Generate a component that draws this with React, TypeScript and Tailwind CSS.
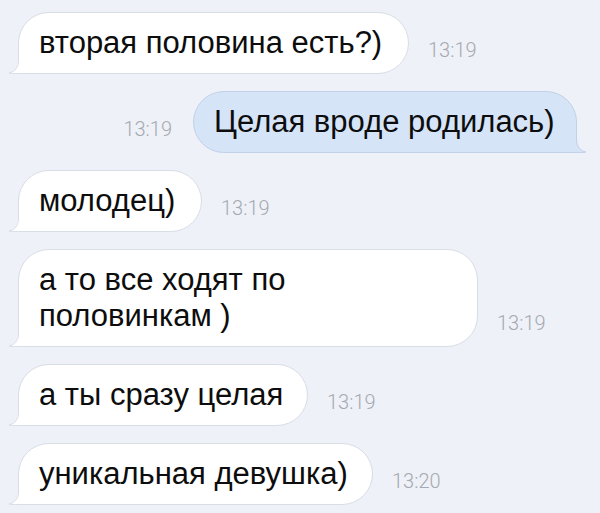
import React from 'react';

type Msg = {
    text: React.ReactNode;
    time: string;
    out?: boolean;
    width: string;
};

const messages: Msg[] = [
    { text: 'вторая половина есть?)', time: '13:19', width: 'w-[391px]' },
    { text: 'Целая вроде родилась)', time: '13:19', out: true, width: 'w-[384px]' },
    { text: 'молодец)', time: '13:19', width: 'w-[184px]' },
    {
        text: (
            <>
                а то все ходят по
                <br />
                половинкам )
            </>
        ),
        time: '13:19',
        width: 'w-[460px]',
    },
    { text: 'а ты сразу целая', time: '13:19', width: 'w-[290px]' },
    { text: 'уникальная девушка)', time: '13:20', width: 'w-[355px]' },
];

// iOS style tail, drawn for the bottom-left corner; mirrored for outgoing bubbles
const Tail = ({ fill, stroke, out }: { fill: string; stroke: string; out?: boolean }) => (
    <svg
        width="44"
        height="34"
        viewBox="0 0 44 34"
        className={`absolute bottom-[-1px] ${out ? 'right-[-11px] -scale-x-100' : 'left-[-11px]'}`}
    >
        <path d="M10 1 L10 21 C10 28 6 32 1 33 C5 34 9 34 14 34 L44 34 L44 1 Z" fill={fill} />
        <path
            d="M10.5 1 L10.5 21 C10.5 28 6 32 1 33 C5 33.8 9 33.5 14 33.5 L44 33.5"
            fill="none"
            stroke={stroke}
            strokeWidth="1"
        />
    </svg>
);

const Bubble = ({ msg }: { msg: Msg }) => {
    const fill = msg.out ? '#d6e4f8' : '#ffffff';
    const stroke = msg.out ? '#c2d1e7' : '#d8dde6';
    return (
        <div
            className={`relative ${msg.width} rounded-[31px] border pl-[20px] py-[12px] text-[31px] leading-[36px] text-[#0d0d0d] whitespace-nowrap ${
                msg.out ? 'bg-[#d6e4f8] border-[#c2d1e7]' : 'bg-white border-[#d8dde6]'
            }`}
        >
            <Tail fill={fill} stroke={stroke} out={msg.out} />
            <span className="relative">{msg.text}</span>
        </div>
    );
};

const Time = ({ value, className }: { value: string; className: string }) => (
    <span
        className={`mb-[14px] text-[20px] leading-[20px] font-light text-[#a5a9b1] ${className}`}
        style={{ fontFamily: 'Roboto, "Liberation Sans", sans-serif' }}
    >
        {value}
    </span>
);

export default function App() {
    return (
        <div
            className="w-[600px] h-[513px] overflow-hidden bg-[#eef1f7] pt-[12px] flex flex-col gap-[17px]"
            style={{ fontFamily: '"Liberation Sans", Arial, sans-serif' }}
        >
            {messages.map((m, i) =>
                m.out ? (
                    <div key={i} className="flex items-end justify-end pr-[23px]">
                        <Time value={m.time} className="mr-[21px]" />
                        <Bubble msg={m} />
                    </div>
                ) : (
                    <div key={i} className="flex items-end pl-[18px]">
                        <Bubble msg={m} />
                        <Time value={m.time} className="ml-[19px]" />
                    </div>
                )
            )}
        </div>
    );
}
